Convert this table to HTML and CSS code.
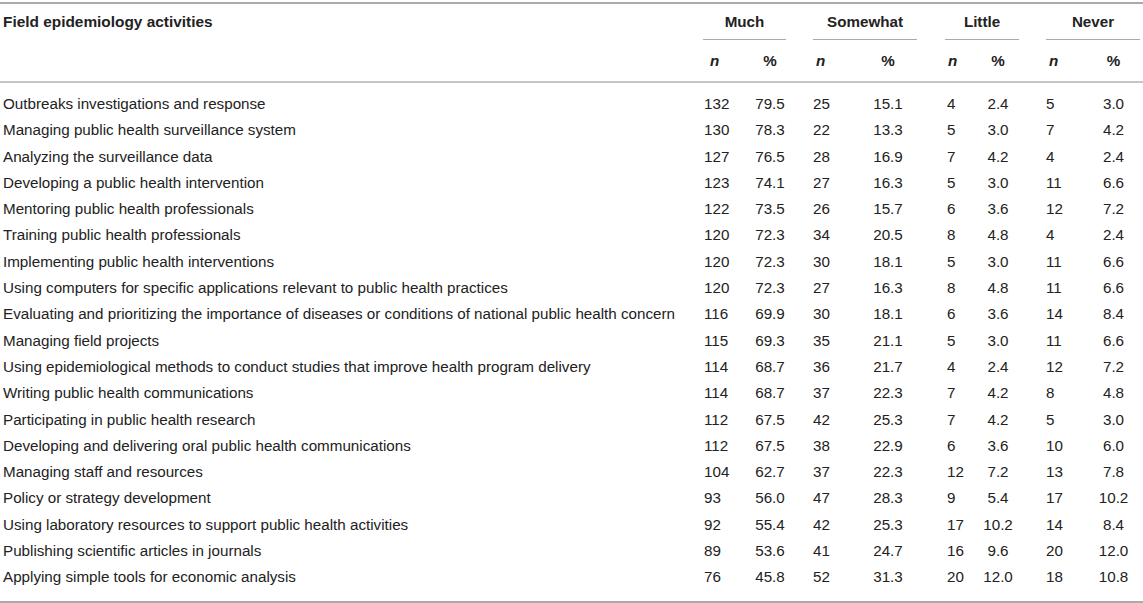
FILE: index.html
```html
<!DOCTYPE html>
<html lang="en">
<head>
    <meta charset="UTF-8">
    <title>Field epidemiology activities</title>
    <link rel="stylesheet" href="styles.css">
</head>
<body>

    <table class="activities">
        <colgroup>
            <col class="w-label">
            <col class="w-much-n"><col class="w-much-p">
            <col class="w-some-n"><col class="w-some-p">
            <col class="w-little-n"><col class="w-little-p">
            <col class="w-never-n"><col class="w-never-p">
        </colgroup>
        <thead>
            <tr class="groups">
                <th class="label" rowspan="2">Field epidemiology activities</th>
                <th colspan="2" class="g-much"><div class="group">Much</div></th>
                <th colspan="2" class="g-some"><div class="group">Somewhat</div></th>
                <th colspan="2" class="g-little"><div class="group">Little</div></th>
                <th colspan="2" class="g-never"><div class="group">Never</div></th>
            </tr>
            <tr class="units">
                <th><i>n</i></th><th>%</th>
                <th><i>n</i></th><th>%</th>
                <th><i>n</i></th><th>%</th>
                <th><i>n</i></th><th>%</th>
            </tr>
        </thead>
        <tbody id="rows"></tbody>
    </table>

    <script>
        // activity, then n / % for much, somewhat, little, never
        const data = [
            ['Outbreaks investigations and response', 132, '79.5', 25, '15.1', 4, '2.4', 5, '3.0'],
            ['Managing public health surveillance system', 130, '78.3', 22, '13.3', 5, '3.0', 7, '4.2'],
            ['Analyzing the surveillance data', 127, '76.5', 28, '16.9', 7, '4.2', 4, '2.4'],
            ['Developing a public health intervention', 123, '74.1', 27, '16.3', 5, '3.0', 11, '6.6'],
            ['Mentoring public health professionals', 122, '73.5', 26, '15.7', 6, '3.6', 12, '7.2'],
            ['Training public health professionals', 120, '72.3', 34, '20.5', 8, '4.8', 4, '2.4'],
            ['Implementing public health interventions', 120, '72.3', 30, '18.1', 5, '3.0', 11, '6.6'],
            ['Using computers for specific applications relevant to public health practices', 120, '72.3', 27, '16.3', 8, '4.8', 11, '6.6'],
            ['Evaluating and prioritizing the importance of diseases or conditions of national public health concern', 116, '69.9', 30, '18.1', 6, '3.6', 14, '8.4'],
            ['Managing field projects', 115, '69.3', 35, '21.1', 5, '3.0', 11, '6.6'],
            ['Using epidemiological methods to conduct studies that improve health program delivery', 114, '68.7', 36, '21.7', 4, '2.4', 12, '7.2'],
            ['Writing public health communications', 114, '68.7', 37, '22.3', 7, '4.2', 8, '4.8'],
            ['Participating in public health research', 112, '67.5', 42, '25.3', 7, '4.2', 5, '3.0'],
            ['Developing and delivering oral public health communications', 112, '67.5', 38, '22.9', 6, '3.6', 10, '6.0'],
            ['Managing staff and resources', 104, '62.7', 37, '22.3', 12, '7.2', 13, '7.8'],
            ['Policy or strategy development', 93, '56.0', 47, '28.3', 9, '5.4', 17, '10.2'],
            ['Using laboratory resources to support public health activities', 92, '55.4', 42, '25.3', 17, '10.2', 14, '8.4'],
            ['Publishing scientific articles in journals', 89, '53.6', 41, '24.7', 16, '9.6', 20, '12.0'],
            ['Applying simple tools for economic analysis', 76, '45.8', 52, '31.3', 20, '12.0', 18, '10.8']
        ];

        const tbody = document.getElementById('rows');
        data.forEach((row, index) => {
            const tr = document.createElement('tr');
            if (index === 0) tr.className = 'first';
            if (index === data.length - 1) tr.className = 'last';
            row.forEach(value => {
                const td = document.createElement('td');
                td.textContent = value;
                tr.appendChild(td);
            });
            tbody.appendChild(tr);
        });
    </script>

</body>
</html>
```

FILE: styles.css
```css
body {
    font-family: "Liberation Sans", Arial, sans-serif;
    margin: 0;
    padding-top: 2px;
    background-color: #fff;
    color: #222;
}
.activities {
    width: 1143px;
    table-layout: fixed;
    border-collapse: collapse;
    font-size: 15.2px;
    border-top: 2px solid #aaa;
    border-bottom: 2px solid #aaa;
}
.w-label { width: 697px; }
.w-much-n { width: 43px; }
.w-much-p { width: 60px; }
.w-some-n { width: 46px; }
.w-some-p { width: 84px; }
.w-little-n { width: 40px; }
.w-little-p { width: 56px; }
.w-never-n { width: 58px; }
.w-never-p { width: 59px; }

th, td {
    padding: 0;
    font-weight: normal;
    white-space: nowrap;
}
thead th {
    font-weight: bold;
}
thead tr.units th {
    height: 41px;
    border-bottom: 2px solid #c6c6c6;
}
.groups th {
    height: 36px;
    vertical-align: bottom;
}
.groups th.label {
    text-align: left;
    vertical-align: top;
    font-size: 15.4px;
    line-height: 18px;
    padding: 9px 0 0 3px;
    border-bottom: 2px solid #c6c6c6;
}
.group {
    line-height: 35px;
    text-align: center;
    border-bottom: 1px solid #aaa;
}
.g-much .group { margin: 0 14px 0 6px; }
.g-some .group { margin: 0 13px 0 13px; }
.g-little .group { margin: 0 7px 0 15px; }
.g-never .group { margin: 0 3px 0 20px; }

/* n columns start at a fixed offset, % columns are centred */
.units th:nth-child(odd) { text-align: left; }
.units th:nth-child(even) { text-align: center; }
.units th:nth-child(1) { padding-left: 13px; }
.units th:nth-child(3) { padding-left: 16px; }
.units th:nth-child(5) { padding-left: 18px; }
.units th:nth-child(7) { padding-left: 23px; }

td {
    height: 26.3px;
    line-height: 26.3px;
    text-align: center;
}
td:first-child {
    text-align: left;
    padding-left: 3px;
}
td:nth-child(2) { text-align: left; padding-left: 7px; }
td:nth-child(4) { text-align: left; padding-left: 13px; }
td:nth-child(6) { text-align: left; padding-left: 17px; }
td:nth-child(8) { text-align: left; padding-left: 20px; }

tr.first td { padding-top: 8px; }
tr.last td { padding-bottom: 10px; }
```
